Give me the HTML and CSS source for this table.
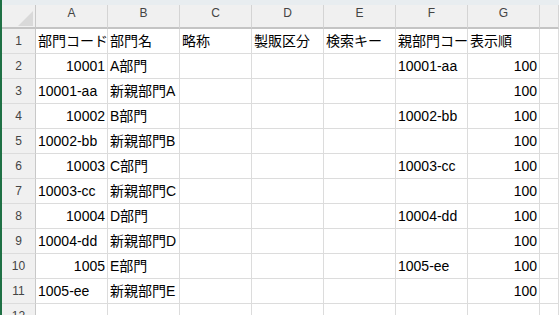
FILE: index.html
```html
<!DOCTYPE html>
<html lang="ja">
<head>
<meta charset="utf-8">
<link rel="stylesheet" href="styles.css">
</head>
<body>
<div class="app">
  <div class="edge"></div>
  <div class="sheet">
    <div class="band"></div>
    <div class="grid">
      <div class="corner"><svg width="15" height="15" viewBox="0 0 15 15"><polygon points="15,0 15,15 0,15" fill="#d9d9d9"/></svg></div>
      <div class="ch">A</div><div class="ch">B</div><div class="ch">C</div><div class="ch">D</div><div class="ch">E</div><div class="ch">F</div><div class="ch">G</div><div class="ch"></div>

      <div class="rh">1</div><div class="c">部門コード</div><div class="c">部門名</div><div class="c">略称</div><div class="c">製販区分</div><div class="c">検索キー</div><div class="c">親部門コード</div><div class="c">表示順</div><div class="c"></div>
      <div class="rh">2</div><div class="c n">10001</div><div class="c">A部門</div><div class="c"></div><div class="c"></div><div class="c"></div><div class="c">10001-aa</div><div class="c n">100</div><div class="c"></div>
      <div class="rh">3</div><div class="c">10001-aa</div><div class="c">新親部門A</div><div class="c"></div><div class="c"></div><div class="c"></div><div class="c"></div><div class="c n">100</div><div class="c"></div>
      <div class="rh">4</div><div class="c n">10002</div><div class="c">B部門</div><div class="c"></div><div class="c"></div><div class="c"></div><div class="c">10002-bb</div><div class="c n">100</div><div class="c"></div>
      <div class="rh">5</div><div class="c">10002-bb</div><div class="c">新親部門B</div><div class="c"></div><div class="c"></div><div class="c"></div><div class="c"></div><div class="c n">100</div><div class="c"></div>
      <div class="rh">6</div><div class="c n">10003</div><div class="c">C部門</div><div class="c"></div><div class="c"></div><div class="c"></div><div class="c">10003-cc</div><div class="c n">100</div><div class="c"></div>
      <div class="rh">7</div><div class="c">10003-cc</div><div class="c">新親部門C</div><div class="c"></div><div class="c"></div><div class="c"></div><div class="c"></div><div class="c n">100</div><div class="c"></div>
      <div class="rh">8</div><div class="c n">10004</div><div class="c">D部門</div><div class="c"></div><div class="c"></div><div class="c"></div><div class="c">10004-dd</div><div class="c n">100</div><div class="c"></div>
      <div class="rh">9</div><div class="c">10004-dd</div><div class="c">新親部門D</div><div class="c"></div><div class="c"></div><div class="c"></div><div class="c"></div><div class="c n">100</div><div class="c"></div>
      <div class="rh">10</div><div class="c n">1005</div><div class="c">E部門</div><div class="c"></div><div class="c"></div><div class="c"></div><div class="c">1005-ee</div><div class="c n">100</div><div class="c"></div>
      <div class="rh">11</div><div class="c">1005-ee</div><div class="c">新親部門E</div><div class="c"></div><div class="c"></div><div class="c"></div><div class="c"></div><div class="c n">100</div><div class="c"></div>
      <div class="rh">12</div><div class="c"></div><div class="c"></div><div class="c"></div><div class="c"></div><div class="c"></div><div class="c"></div><div class="c"></div><div class="c"></div>
    </div>
  </div>
</div>
</body>
</html>
```

FILE: styles.css
```css
html, body {
  margin: 0;
  padding: 0;
  width: 559px;
  height: 315px;
  overflow: hidden;
  background: #ffffff;
}

.app {
  display: flex;
  height: 315px;
}

.edge {
  width: 2px;
  flex: none;
  background: #1f7145;
}

.sheet {
  flex: 1;
  display: flex;
  flex-direction: column;
  overflow: hidden;
}

.band {
  height: 5px;
  flex: none;
  background: #e8edf0;
}

.grid {
  display: grid;
  grid-template-columns: 34px repeat(7, 72px) 1fr;
  grid-auto-rows: 25px;
  grid-template-rows: 24px;
}

.corner {
  box-sizing: border-box;
  background: #f0f0f0;
  border-right: 1px solid #c8c8c8;
  border-bottom: 2px solid #c4c4c4;
  display: flex;
  justify-content: flex-end;
  align-items: flex-end;
  padding: 0 2px 1px 0;
}

.corner svg {
  display: block;
}

.ch {
  box-sizing: border-box;
  background: #f0f0f0;
  border-right: 1px solid #d4d4d4;
  border-bottom: 2px solid #c4c4c4;
  font-family: "Liberation Sans", Arial, sans-serif;
  font-size: 12px;
  line-height: 12px;
  padding-top: 2px;
  color: #444444;
  text-align: center;
}

.rh {
  box-sizing: border-box;
  background: #f0f0f0;
  border-right: 1px solid #c8c8c8;
  border-bottom: 1px solid #dcdcdc;
  font-family: "Liberation Sans", Arial, sans-serif;
  font-size: 12px;
  line-height: 24px;
  color: #444444;
  text-align: center;
}

.c {
  box-sizing: border-box;
  border-right: 1px solid #dcdcdc;
  border-bottom: 1px solid #dcdcdc;
  font-family: "Liberation Sans", "Noto Sans CJK JP", sans-serif;
  font-size: 14px;
  line-height: 24px;
  color: #000000;
  padding: 0 2px 0 2px;
  white-space: nowrap;
  overflow: hidden;
}

.n {
  text-align: right;
}
```
